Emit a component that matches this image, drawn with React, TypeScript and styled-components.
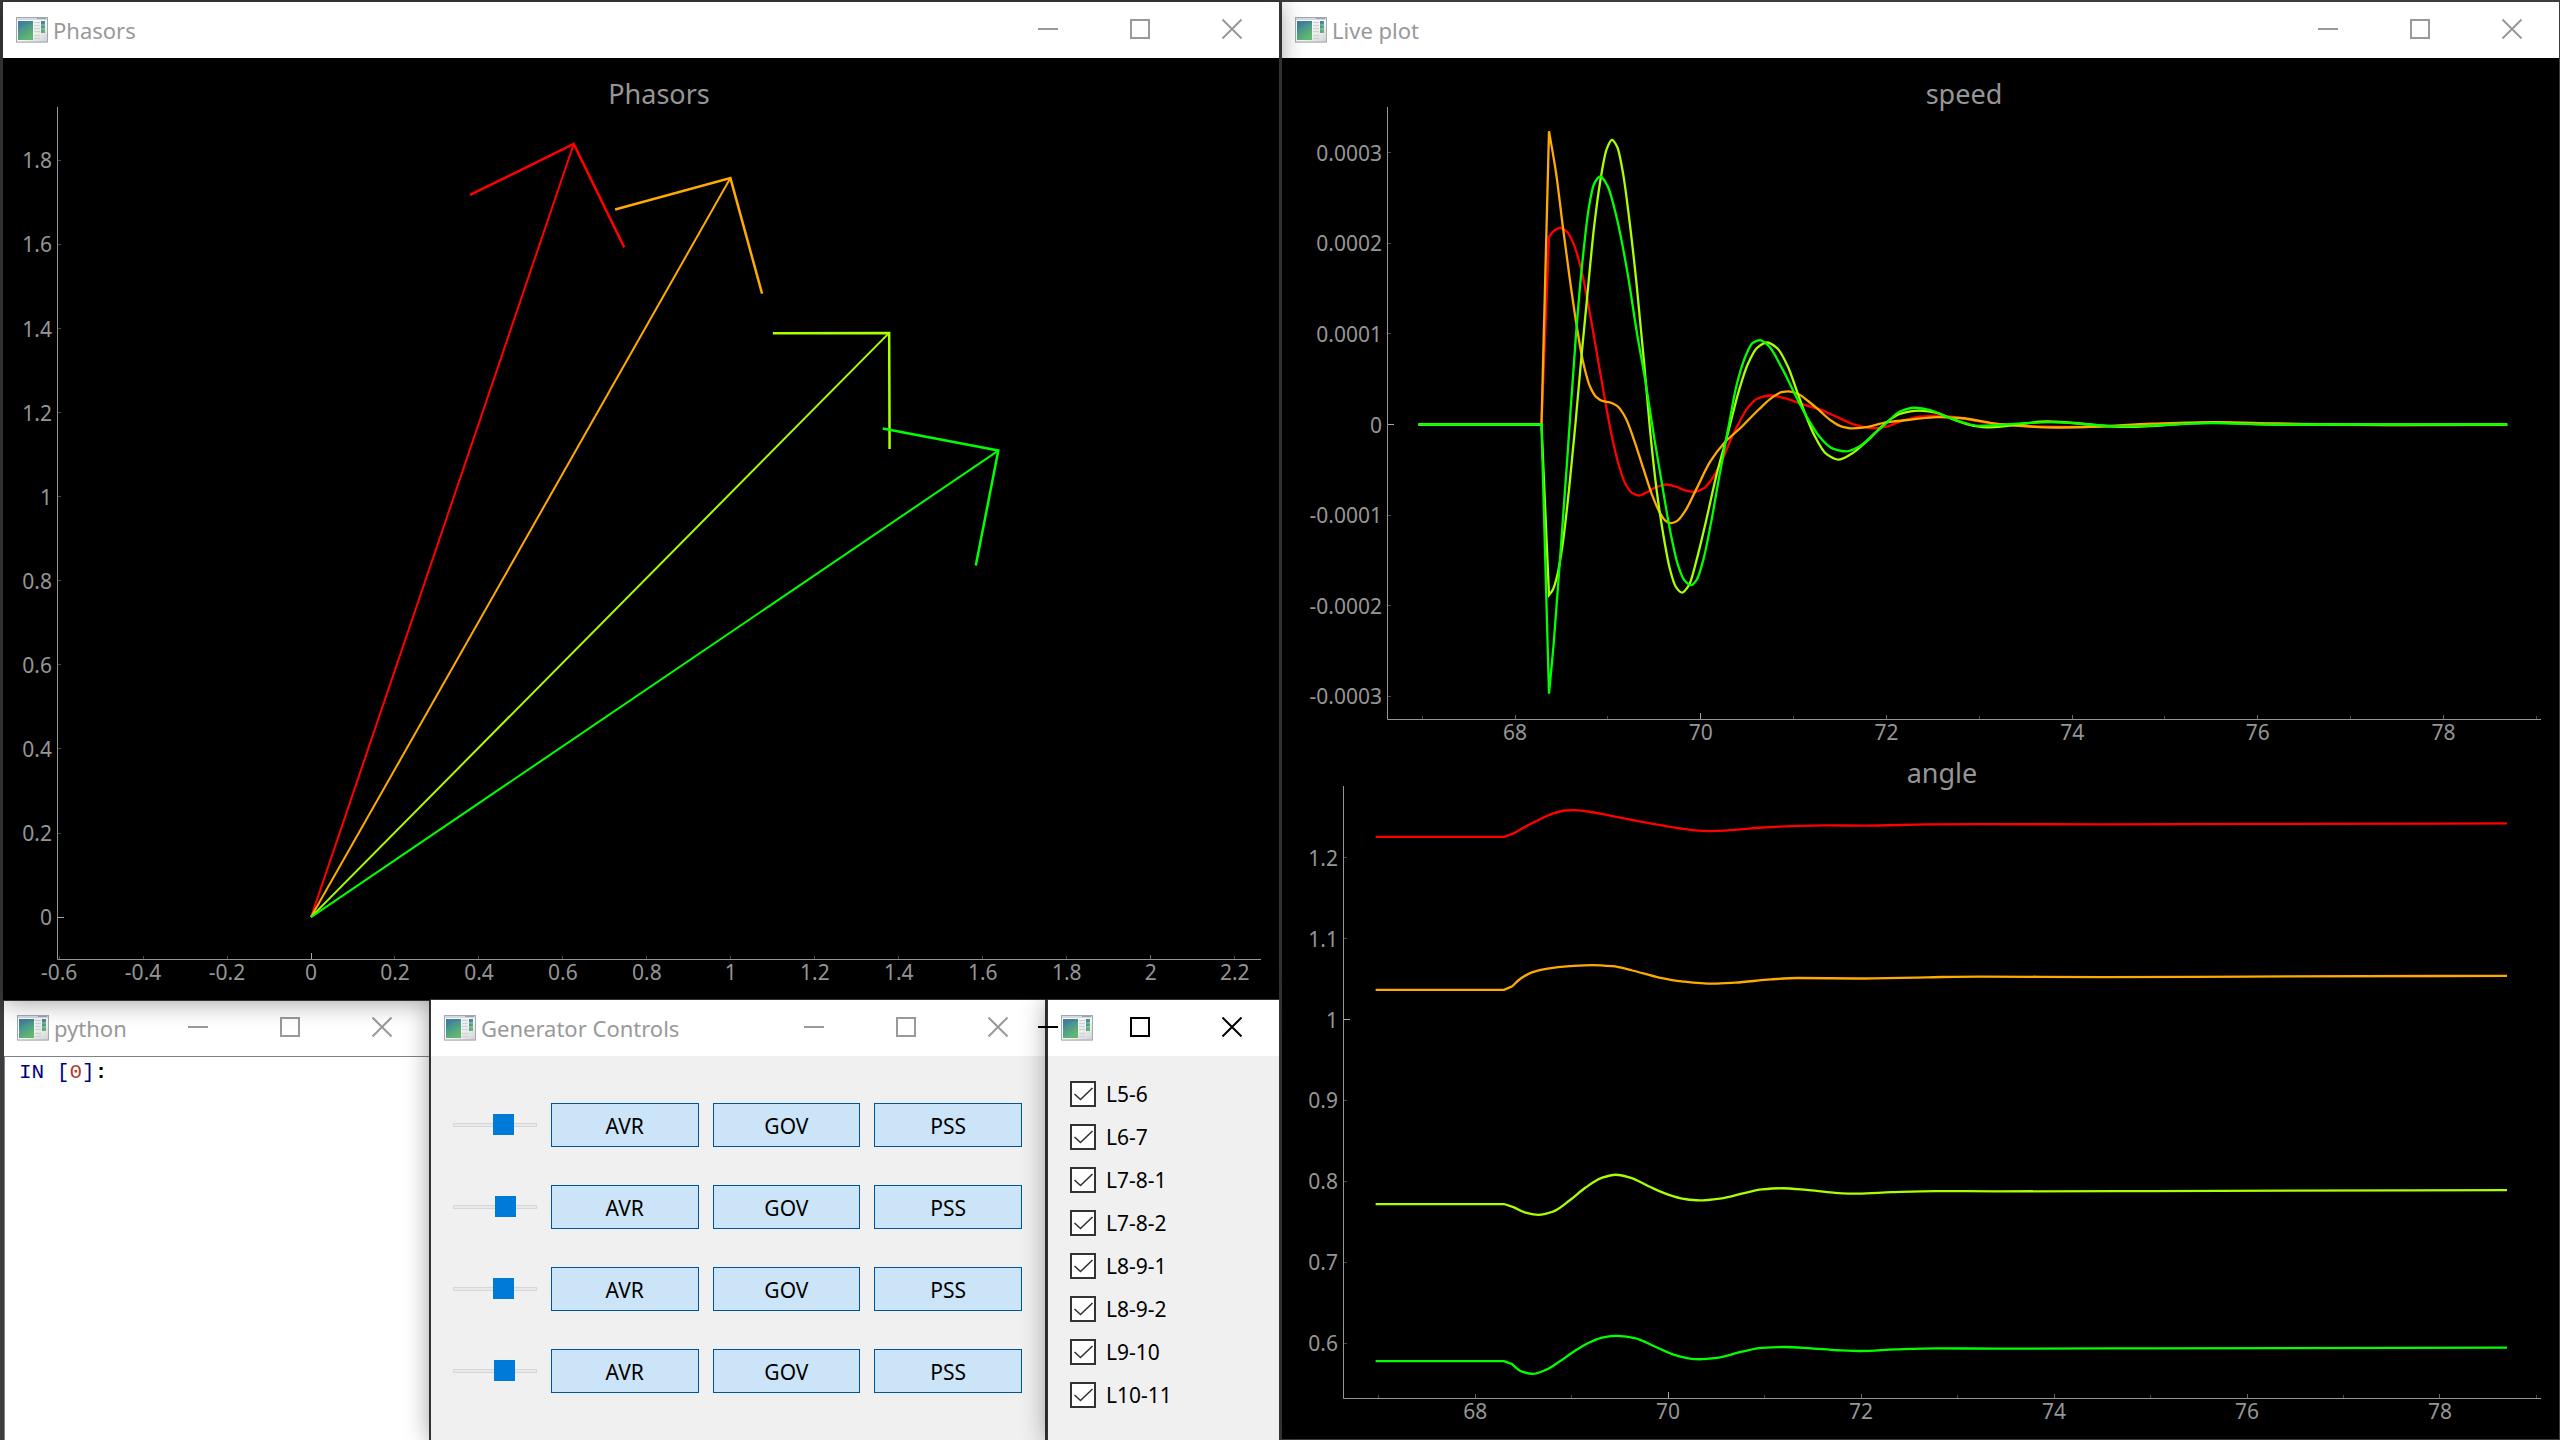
import React, { useId, useLayoutEffect, useRef, useState } from "react";
import styled, { createGlobalStyle, css } from "styled-components";

/* ---------- data ---------- */

type Point = [number, number];
interface Series {
  color: string;
  points: Point[];
}

const RED = "#ff0000";
const ORANGE = "#ffaa00";
const LIME = "#aaff00";
const GREEN = "#00ff00";

const phasors = [
  { color: RED, tip: [0.6257, 1.839], barbs: [[0.3786, 1.7177], [0.746, 1.593]] },
  { color: ORANGE, tip: [0.9989, 1.758], barbs: [[0.7243, 1.683], [1.0743, 1.483]] },
  { color: LIME, tip: [1.377, 1.3896], barbs: [[1.0999, 1.3886], [1.378, 1.1137]] },
  { color: GREEN, tip: [1.637, 1.1097], barbs: [[1.3617, 1.162], [1.5833, 0.8361]] },
] as { color: string; tip: Point; barbs: Point[] }[];

/* speed deviation, in units of 1e-4 */
const speedSeries: Series[] = [
  {
    color: RED,
    points: [
      [66.96, 0], [68.284, 0], [68.365, 2.07], [68.418, 2.138], [68.486, 2.169], [68.553, 2.133],
      [68.62, 2.016], [68.707, 1.733], [68.803, 1.238], [68.899, 0.675], [68.976, 0.225],
      [69.043, -0.135], [69.115, -0.441], [69.188, -0.653], [69.26, -0.756], [69.332, -0.783],
      [69.404, -0.756], [69.524, -0.689], [69.63, -0.662], [69.74, -0.689], [69.837, -0.729],
      [69.933, -0.743], [70.029, -0.707], [70.125, -0.594], [70.221, -0.414], [70.317, -0.18],
      [70.413, 0.023], [70.51, 0.189], [70.606, 0.284], [70.75, 0.32], [70.894, 0.293],
      [71.063, 0.234], [71.279, 0.167], [71.471, 0.081], [71.639, 0.005], [71.784, -0.032],
      [71.88, -0.041], [72, -0.023], [72.168, 0.04], [72.36, 0.086], [72.529, 0.099],
      [72.697, 0.086], [72.89, 0.054], [73.216, 0], [73.95, -0.027], [74.86, 0], [75.6, 0.02],
      [77.1, -0.006], [78.686, -0.006],
    ],
  },
  {
    color: ORANGE,
    points: [
      [66.96, 0], [68.284, 0], [68.365, 3.236], [68.442, 2.768], [68.514, 2.183], [68.587, 1.62],
      [68.659, 1.116], [68.731, 0.695], [68.803, 0.428], [68.875, 0.302], [68.947, 0.257],
      [69.019, 0.244], [69.101, 0.203], [69.188, 0.077], [69.284, -0.18], [69.38, -0.482],
      [69.476, -0.779], [69.563, -0.981], [69.62, -1.062], [69.678, -1.089], [69.74, -1.067],
      [69.837, -0.945], [69.957, -0.702], [70.101, -0.41], [70.245, -0.212], [70.438, -0.027],
      [70.63, 0.171], [70.774, 0.302], [70.87, 0.356], [70.942, 0.365], [71.038, 0.342],
      [71.159, 0.257], [71.279, 0.153], [71.4, 0.045], [71.519, -0.023], [71.639, -0.043],
      [71.76, -0.032], [72, 0.023], [72.264, 0.054], [72.553, 0.081], [72.793, 0.072],
      [73.216, 0.005], [73.82, -0.033], [74.18, -0.027], [74.86, 0.009], [75.54, 0.027],
      [76.2, 0.012], [77.6, -0.006], [78.686, 0],
    ],
  },
  {
    color: LIME,
    points: [
      [66.96, 0], [68.284, 0], [68.365, -1.881], [68.404, -1.827], [68.452, -1.674],
      [68.514, -1.305], [68.587, -0.653], [68.649, 0], [68.716, 0.765], [68.779, 1.44],
      [68.851, 2.183], [68.923, 2.723], [68.986, 3.038], [69.043, 3.141], [69.101, 3.06],
      [69.163, 2.768], [69.226, 2.295], [69.308, 1.553], [69.394, 0.63], [69.452, -0.045],
      [69.524, -0.72], [69.596, -1.215], [69.668, -1.598], [69.731, -1.791], [69.798, -1.854],
      [69.87, -1.778], [69.957, -1.485], [70.053, -1.08], [70.173, -0.54], [70.293, -0.09],
      [70.413, 0.383], [70.51, 0.675], [70.606, 0.846], [70.712, 0.905], [70.822, 0.842],
      [70.942, 0.63], [71.038, 0.36], [71.135, 0.09], [71.231, -0.135], [71.351, -0.324],
      [71.481, -0.387], [71.615, -0.329], [71.784, -0.189], [72, 0.023], [72.144, 0.117],
      [72.351, 0.153], [72.529, 0.131], [72.745, 0.045], [72.938, -0.014], [73.106, -0.032],
      [73.73, 0.033], [74.59, -0.027], [75.5, 0.02], [76.2, 0], [78.686, 0],
    ],
  },
  {
    color: GREEN,
    points: [
      [66.96, 0], [68.284, 0], [68.365, -2.97], [68.418, -2.385], [68.49, -1.395],
      [68.563, -0.36], [68.587, 0], [68.659, 1.035], [68.721, 1.755], [68.793, 2.385],
      [68.851, 2.655], [68.918, 2.736], [68.995, 2.633], [69.091, 2.295], [69.212, 1.665],
      [69.308, 1.035], [69.404, 0.473], [69.5, -0.158], [69.596, -0.743], [69.678, -1.215],
      [69.755, -1.553], [69.827, -1.724], [69.894, -1.773], [69.957, -1.71], [70.029, -1.485],
      [70.111, -1.08], [70.197, -0.585], [70.303, 0], [70.389, 0.45], [70.486, 0.765],
      [70.558, 0.9], [70.635, 0.932], [70.726, 0.873], [70.87, 0.63], [71.038, 0.284],
      [71.159, 0.054], [71.279, -0.135], [71.423, -0.266], [71.567, -0.297], [71.712, -0.239],
      [71.88, -0.09], [72, 0.014], [72.144, 0.144], [72.298, 0.185], [72.457, 0.162],
      [72.649, 0.086], [72.841, 0.018], [73.0, -0.015], [73.77, 0.027], [74.54, -0.021],
      [75.5, 0.015], [76.2, 0], [78.686, 0],
    ],
  },
];

const angleSeries: Series[] = [
  {
    color: RED,
    points: [
      [66.968, 1.2257], [68.3, 1.2257], [68.403, 1.2303], [68.495, 1.2367], [68.657, 1.2466],
      [68.796, 1.2542], [68.935, 1.2583], [69.019, 1.2589], [69.167, 1.2571], [69.398, 1.2519],
      [69.676, 1.2455], [70, 1.2385], [70.231, 1.2344], [70.44, 1.2329], [70.694, 1.2344],
      [70.972, 1.2373], [71.296, 1.2391], [71.62, 1.2399], [72.037, 1.2397], [72.685, 1.2411],
      [73.23, 1.2415], [74.5, 1.2411], [76, 1.2417], [78.695, 1.2423],
    ],
  },
  {
    color: ORANGE,
    points: [
      [66.968, 1.0367], [68.3, 1.0367], [68.38, 1.0408], [68.472, 1.0507], [68.588, 1.0583],
      [68.75, 1.063], [68.981, 1.0659], [69.213, 1.0673], [69.421, 1.0659], [69.63, 1.0606],
      [69.907, 1.0519], [70.139, 1.0472], [70.463, 1.0443], [70.694, 1.0455], [71.065, 1.0496],
      [71.343, 1.0513], [71.944, 1.0507], [72.685, 1.0522], [73.231, 1.0531], [74.5, 1.0525],
      [76, 1.0531], [78.695, 1.054],
    ],
  },
  {
    color: LIME,
    points: [
      [66.968, 0.772], [68.3, 0.772], [68.403, 0.7679], [68.519, 0.7615], [68.657, 0.7586],
      [68.806, 0.7627], [68.981, 0.7767], [69.144, 0.7924], [69.306, 0.8041], [69.454, 0.8082],
      [69.606, 0.8047], [69.815, 0.793], [70, 0.7837], [70.162, 0.7784], [70.324, 0.7764],
      [70.556, 0.779], [70.787, 0.7854], [70.972, 0.7901], [71.181, 0.7915], [71.435, 0.7895],
      [71.713, 0.786], [71.968, 0.7848], [72.315, 0.7866], [72.778, 0.788], [73.4, 0.7877],
      [75, 0.788], [78.695, 0.7893],
    ],
  },
  {
    color: GREEN,
    points: [
      [66.968, 0.5778], [68.3, 0.5778], [68.38, 0.5743], [68.472, 0.5656], [68.597, 0.5621],
      [68.727, 0.5668], [68.866, 0.5767], [69.028, 0.5901], [69.19, 0.6012], [69.329, 0.6073],
      [69.468, 0.609], [69.653, 0.6064], [69.861, 0.5959], [70.069, 0.5854], [70.208, 0.5813],
      [70.324, 0.5802], [70.509, 0.5819], [70.764, 0.5895], [70.972, 0.5942], [71.204, 0.5953],
      [71.481, 0.5936], [71.759, 0.5913], [71.991, 0.5904], [72.361, 0.5924], [72.778, 0.5936],
      [73.4, 0.5933], [75, 0.5936], [78.695, 0.5945],
    ],
  },
];

const lineNames = ["L5-6", "L6-7", "L7-8-1", "L7-8-2", "L8-9-1", "L8-9-2", "L9-10", "L10-11"];
const generators = [
  { name: "G1", level: 64 },
  { name: "G2", level: 67 },
  { name: "G3", level: 64 },
  { name: "G4", level: 65 },
];
const controllers = ["AVR", "GOV", "PSS"];

/* ---------- page and windows ---------- */

const UI_FONT = `"Noto Sans", "Open Sans", sans-serif`;

const GlobalStyle = createGlobalStyle`
  *, *::before, *::after { box-sizing: border-box; }
  body { margin: 0; background: #3c3c3c; font-family: ${UI_FONT}; }
  button, input { font: inherit; margin: 0; }
`;

const Desktop = styled.main`
  display: grid;
  grid-template-columns: minmax(0, 1276fr) minmax(0, 1277fr);
  column-gap: 3px;
  min-height: 100vh;
  padding: 2px 1px 0 3px;
  overflow: hidden;
`;

const LeftColumn = styled.div`
  display: grid;
  grid-template-rows: minmax(0, 1fr) 440px;
`;

const ToolRow = styled.div`
  display: grid;
  grid-template-columns: minmax(0, 426fr) minmax(0, 614fr) minmax(0, 232fr);
  column-gap: 2px;
`;

const WindowFrame = styled.section<{ $level: number; $surface: string; $edge?: boolean }>`
  position: relative;
  z-index: ${(p) => p.$level};
  display: flex;
  flex-direction: column;
  min-width: 0;
  background: ${(p) => p.$surface};
  box-shadow: ${(p) =>
    p.$level > 1 ? "0 0 0 1px #333333, 0 1px 24px rgba(0, 0, 0, 0.42)" : "none"};
  ${(p) => p.$edge && css`margin-left: 1px;`}
`;

const LiveFrame = styled(WindowFrame)`
  margin-bottom: 1px;
`;

/* Icon and caption share one grid cell with the buttons, which may run past a narrow window. */
const TitleBar = styled.header`
  display: grid;
  grid-template-columns: minmax(0, 1fr);
  height: 56px;
  flex: none;
  color: #999999;
`;

const Caption = styled.div`
  grid-area: 1 / 1;
  display: flex;
  align-items: center;
  gap: 5px;
  padding-left: 13px;
`;

const CaptionText = styled.h2`
  margin: 0;
  font-size: 22px;
  line-height: 28px;
  font-weight: 400;
  white-space: nowrap;
`;

const WindowButtons = styled.div`
  grid-area: 1 / 1;
  justify-self: end;
  display: flex;
  padding-right: 1px;
`;

const WindowButton = styled.button<{ $active: boolean }>`
  display: grid;
  place-items: center;
  width: 92px;
  height: 54px;
  padding: 0;
  border: 0;
  background: none;
  color: ${(p) => (p.$active ? "#000000" : "#999999")};
  svg {
    display: block;
    fill: none;
    stroke: currentColor;
    stroke-width: 2;
  }
`;

function AppIcon() {
  const id = useId();
  return (
    <svg width="32" height="26" viewBox="0 0 32 26" aria-hidden="true">
      <defs>
        <linearGradient id={`${id}f`} x1="0" y1="0" x2="1" y2="1">
          <stop offset="0" stopColor="#ffffff" />
          <stop offset="0.6" stopColor="#f4f4f5" />
          <stop offset="1" stopColor="#cfd0d2" />
        </linearGradient>
        <linearGradient id={`${id}g`} x1="0" y1="0" x2="0.5" y2="1">
          <stop offset="0" stopColor="#3f7fa6" />
          <stop offset="0.45" stopColor="#4a9690" />
          <stop offset="1" stopColor="#62b96c" />
        </linearGradient>
      </defs>
      <rect x="0.5" y="0.5" width="31" height="24.5" fill={`url(#${id}f)`} stroke="#a4a9b0" />
      <path d="M1 1h30v2H1z" fill="#d3d8e2" />
      <path d="M21 1.5h9" stroke="#9aa1ae" />
      <path d="M0.5 25.5h31" stroke="#c4c6c8" />
      <rect x="2" y="4" width="15" height="19" fill={`url(#${id}g)`} />
      <path d="M2 13C6 8 11 6.5 17 6V4H2z" fill="#3b7396" opacity="0.35" />
      <path
        d="M18 5.5h6M18 8.5h6M18 11.5h6M18 14.5h6M18 18.5h6M18 21.5h6"
        stroke="#d0d1d4"
        strokeWidth="1.5"
      />
      <rect x="25" y="4" width="4" height="12" fill={`url(#${id}g)`} />
      <path d="M25 8h4M25 12h4" stroke="#e6efe9" strokeWidth="0.5" />
    </svg>
  );
}

interface WindowProps {
  title?: string;
  name: string;
  level: number;
  surface: string;
  active?: boolean;
  edge?: boolean;
  frame?: typeof WindowFrame;
  children: React.ReactNode;
}

const TitleSurface = styled.div`
  background: #ffffff;
`;

function AppWindow({
  title,
  name,
  level,
  surface,
  active = false,
  edge,
  frame: Frame = WindowFrame,
  children,
}: WindowProps) {
  return (
    <Frame $level={level} $surface={surface} $edge={edge} aria-label={name}>
      <TitleSurface>
        <TitleBar>
          <Caption>
            <AppIcon />
            {title && <CaptionText>{title}</CaptionText>}
          </Caption>
          <WindowButtons>
            <WindowButton $active={active} aria-label={`Minimize ${name}`}>
              <svg width="20" height="20" viewBox="0 0 20 20">
                <path d="M0 10h20" />
              </svg>
            </WindowButton>
            <WindowButton $active={active} aria-label={`Maximize ${name}`}>
              <svg width="20" height="20" viewBox="0 0 20 20">
                <rect x="1" y="1" width="18" height="18" />
              </svg>
            </WindowButton>
            <WindowButton $active={active} aria-label={`Close ${name}`}>
              <svg width="20" height="20" viewBox="0 0 20 20">
                <path d="M0.5 0.5l19 19M19.5 0.5l-19 19" />
              </svg>
            </WindowButton>
          </WindowButtons>
        </TitleBar>
      </TitleSurface>
      {children}
    </Frame>
  );
}

/* ---------- charts ---------- */

const PlotArea = styled.div`
  display: flex;
  flex-direction: column;
  flex: 1;
  min-height: 0;
  padding: 9px 18px 14px 0;
  background: #000000;
`;

const Chart = styled.figure<{ $axis: number }>`
  display: flex;
  flex-direction: column;
  flex: 1 1 0;
  min-height: 160px;
  margin: 0;
  padding: 0 0 27px ${(p) => p.$axis}px;
`;

const ChartTitle = styled.figcaption`
  height: 40px;
  color: #969696;
  font-size: 27px;
  line-height: 54px;
  text-align: center;
`;

const Canvas = styled.div`
  flex: 1;
  min-height: 0;
  svg {
    display: block;
    overflow: visible;
  }
`;

const TickText = styled.text`
  fill: #969696;
  font-family: ${UI_FONT};
  font-size: 21px;
`;

function useSize() {
  const ref = useRef<HTMLDivElement>(null);
  const [size, setSize] = useState({ width: 0, height: 0 });
  useLayoutEffect(() => {
    const node = ref.current;
    if (!node) return;
    const read = () => setSize({ width: node.clientWidth, height: node.clientHeight });
    read();
    const observer = new ResizeObserver(read);
    observer.observe(node);
    return () => observer.disconnect();
  }, []);
  return { ref, size };
}

/* Monotone cubic through the samples, with a corner wherever the slope jumps at the fault. */
function curvePath(points: Point[], corners: number[]) {
  const n = points.length;
  const slope: number[] = [];
  for (let i = 0; i < n - 1; i++) {
    slope.push((points[i + 1][1] - points[i][1]) / (points[i + 1][0] - points[i][0]));
  }
  const tangent = (i: number, side: -1 | 1) => {
    if (i === 0) return slope[0];
    if (i === n - 1) return slope[n - 2];
    if (corners.includes(i)) return side < 0 ? slope[i - 1] : slope[i];
    const a = slope[i - 1];
    const b = slope[i];
    if (a * b <= 0) return 0;
    const ha = points[i][0] - points[i - 1][0];
    const hb = points[i + 1][0] - points[i][0];
    const w1 = 2 * hb + ha;
    const w2 = hb + 2 * ha;
    return (w1 + w2) / (w1 / a + w2 / b);
  };
  let d = `M${points[0][0]} ${points[0][1]}`;
  for (let i = 0; i < n - 1; i++) {
    const [x0, y0] = points[i];
    const [x1, y1] = points[i + 1];
    const h = (x1 - x0) / 3;
    d += `C${x0 + h} ${y0 + h * tangent(i, 1)} ${x1 - h} ${y1 - h * tangent(i + 1, -1)} ${x1} ${y1}`;
  }
  return d;
}

interface Tick {
  at: number;
  label?: string;
  weight: 1 | 2 | 3;
}

interface PlotProps {
  title: string;
  axis: number;
  x: [number, number];
  y: [number, number];
  xTicks: Tick[];
  yTicks: Tick[];
  draw: (toX: (v: number) => number, toY: (v: number) => number) => React.ReactNode;
}

const tickColor = { 1: "#484848", 2: "#6a6a6a", 3: "#a8a8a8" };
const tickLength = { 1: 3, 2: 4, 3: 6 };

function Plot({ title, axis, x, y, xTicks, yTicks, draw }: PlotProps) {
  const { ref, size } = useSize();
  const { width, height } = size;
  const toX = (v: number) => ((v - x[0]) / (x[1] - x[0])) * width;
  const toY = (v: number) => height - ((v - y[0]) / (y[1] - y[0])) * height;
  const snap = (v: number) => Math.floor(v) + 0.5;
  return (
    <Chart $axis={axis}>
      <ChartTitle>{title}</ChartTitle>
      <Canvas ref={ref}>
        {width > 0 && (
          <svg width={width} height={height} role="img" aria-label={`${title} plot`}>
            {xTicks.map((t) => (
              <g key={t.at}>
                <line
                  x1={snap(toX(t.at))}
                  x2={snap(toX(t.at))}
                  y1={height}
                  y2={height - tickLength[t.weight]}
                  stroke={tickColor[t.weight]}
                />
                {t.label && (
                  <TickText x={toX(t.at)} y={height + 21} textAnchor="middle">
                    {t.label}
                  </TickText>
                )}
              </g>
            ))}
            {yTicks.map((t) => (
              <g key={t.at}>
                <line
                  x1={1}
                  x2={1 + tickLength[t.weight]}
                  y1={snap(toY(t.at))}
                  y2={snap(toY(t.at))}
                  stroke={tickColor[t.weight]}
                />
                {t.label && (
                  <TickText x={-5} y={toY(t.at) + 8} textAnchor="end">
                    {t.label}
                  </TickText>
                )}
              </g>
            ))}
            <path d={`M0.5 0V${snap(height)}H${width}`} fill="none" stroke="#969696" />
            {draw(toX, toY)}
          </svg>
        )}
      </Canvas>
    </Chart>
  );
}

const drawSeries =
  (series: Series[]) => (toX: (v: number) => number, toY: (v: number) => number) =>
    series.map((s) => (
      <path
        key={s.color}
        d={curvePath(
          s.points.map(([px, py]) => [toX(px), toY(py)] as Point),
          [1, 2],
        )}
        fill="none"
        stroke={s.color}
        strokeWidth="2.3"
      />
    ));

const drawPhasors = (toX: (v: number) => number, toY: (v: number) => number) =>
  phasors.map(({ color, tip, barbs }) => {
    const at = ([px, py]: Point) => `${toX(px)} ${toY(py)}`;
    return (
      <g key={color} stroke={color} fill="none">
        <path d={`M${at([0, 0])}L${at(tip)}`} strokeWidth="2" />
        <path d={`M${at(barbs[0])}L${at(tip)}L${at(barbs[1])}`} strokeWidth="2.5" />
      </g>
    );
  });

const range = (from: number, to: number) =>
  Array.from({ length: to - from + 1 }, (_, i) => from + i);

const tenths = (from: number, to: number, step: number): Tick[] =>
  range(0, Math.round((to - from) / step)).map((i) => {
    const n = from + i * step;
    return { at: n / 10, label: String(n / 10), weight: n === 0 ? 3 : 1 };
  });

const phasorX = tenths(-6, 22, 2).map((t) => (t.at === 2 ? { ...t, weight: 2 as const } : t));
const phasorY = tenths(0, 18, 2);
const timeTicks: Tick[] = range(67, 79).map((n) => ({
  at: n,
  label: n % 2 === 0 ? String(n) : undefined,
  weight: n === 70 ? 3 : n % 2 === 0 ? 2 : 1,
}));
const speedTicks: Tick[] = range(-3, 3).map((n) => ({
  at: n,
  label: n === 0 ? "0" : (n / 10000).toFixed(4),
  weight: n === 0 ? 3 : 1,
}));
const angleTicks: Tick[] = range(6, 12).map((n) => ({
  at: n / 10,
  label: String(n / 10),
  weight: n === 10 ? 3 : 1,
}));

/* ---------- python console ---------- */

const Console = styled.pre`
  flex: 1;
  margin: 0;
  padding: 4px 14px;
  border: solid #7d828c;
  border-width: 1px 0 0 1px;
  color: #000080;
  font-family: "Liberation Mono", "Courier New", monospace;
  font-size: 21px;
  line-height: 24px;
`;

const PromptNumber = styled.span`
  color: #b03a2e;
`;

const PromptColon = styled.b`
  color: #000000;
`;

/* ---------- generator controls ---------- */

const ControlGrid = styled.div`
  flex: 1;
  display: flex;
  flex-direction: column;
  justify-content: center;
  gap: 38px;
  padding: 0 23px 0 22px;
`;

const ControlRow = styled.div`
  display: grid;
  grid-template-columns: minmax(0, 84fr) repeat(3, minmax(0, 148fr));
  column-gap: 14px;
  align-items: center;
`;

const Slider = styled.input`
  appearance: none;
  width: 100%;
  height: 22px;
  background: none;
  &::-webkit-slider-runnable-track {
    height: 4px;
    border: 1px solid #d6d6d6;
    background: #e7eaea;
  }
  &::-webkit-slider-thumb {
    appearance: none;
    width: 21px;
    height: 21px;
    margin-top: -10px;
    border-radius: 0;
    background: #007ad9;
  }
`;

const ToggleButton = styled.button`
  height: 44px;
  padding: 2px 0 0;
  border: 1px solid #005499;
  background: #cce4f7;
  color: #000000;
  font-size: 21px;
  line-height: 40px;
`;

/* ---------- line switches ---------- */

const LineList = styled.div`
  display: flex;
  flex-direction: column;
  gap: 17px;
  padding: 25px 22px;
`;

const LineLabel = styled.label`
  display: flex;
  align-items: center;
  gap: 10px;
  height: 26px;
  color: #000000;
  font-size: 21px;
  line-height: 28px;
`;

const TickBox = styled.span`
  display: grid;
  svg {
    grid-area: 1 / 1;
    pointer-events: none;
    visibility: hidden;
  }
  input:checked + svg {
    visibility: visible;
  }
`;

const TickInput = styled.input`
  grid-area: 1 / 1;
  appearance: none;
  width: 26px;
  height: 26px;
  border: 2px solid #333333;
  background: #ffffff;
`;

export default function App() {
  return (
    <>
      <GlobalStyle />
      <Desktop>
        <LeftColumn>
          <AppWindow title="Phasors" name="Phasors" level={2} surface="#ffffff">
            <PlotArea>
              <Plot
                title="Phasors"
                axis={54}
                x={[-0.605, 2.2626]}
                y={[-0.0997, 1.927]}
                xTicks={phasorX}
                yTicks={phasorY}
                draw={drawPhasors}
              />
            </PlotArea>
          </AppWindow>
          <ToolRow>
            <AppWindow title="python" name="python" level={1} surface="#ffffff" edge>
              <Console>
                IN [<PromptNumber>0</PromptNumber>]<PromptColon>:</PromptColon>
              </Console>
            </AppWindow>
            <AppWindow title="Generator Controls" name="Generator Controls" level={3} surface="#f0f0f0">
              <ControlGrid>
                {generators.map((g) => (
                  <ControlRow key={g.name}>
                    <Slider type="range" defaultValue={g.level} aria-label={`${g.name} level`} />
                    {controllers.map((c) => (
                      <ToggleButton key={c} aria-pressed="true">
                        {c}
                      </ToggleButton>
                    ))}
                  </ControlRow>
                ))}
              </ControlGrid>
            </AppWindow>
            <AppWindow name="Lines" level={4} surface="#f0f0f0" active edge>
              <LineList>
                {lineNames.map((name) => (
                  <LineLabel key={name}>
                    <TickBox>
                      <TickInput type="checkbox" defaultChecked />
                      <svg width="26" height="26" viewBox="0 0 26 26" aria-hidden="true">
                        <path d="M4.5 13l6 5.5l12-11.5" fill="none" stroke="#333333" strokeWidth="1.6" />
                      </svg>
                    </TickBox>
                    {name}
                  </LineLabel>
                ))}
              </LineList>
            </AppWindow>
          </ToolRow>
        </LeftColumn>
        <AppWindow title="Live plot" name="Live plot" level={1} surface="#ffffff" frame={LiveFrame as typeof WindowFrame}>
          <PlotArea>
            <Plot
              title="speed"
              axis={105}
              x={[66.62, 79.05]}
              y={[-3.249, 3.503]}
              xTicks={timeTicks}
              yTicks={speedTicks}
              draw={drawSeries(speedSeries)}
            />
            <Plot
              title="angle"
              axis={61}
              x={[66.63, 79.047]}
              y={[0.5323, 1.2886]}
              xTicks={timeTicks}
              yTicks={angleTicks}
              draw={drawSeries(angleSeries)}
            />
          </PlotArea>
        </AppWindow>
      </Desktop>
    </>
  );
}
